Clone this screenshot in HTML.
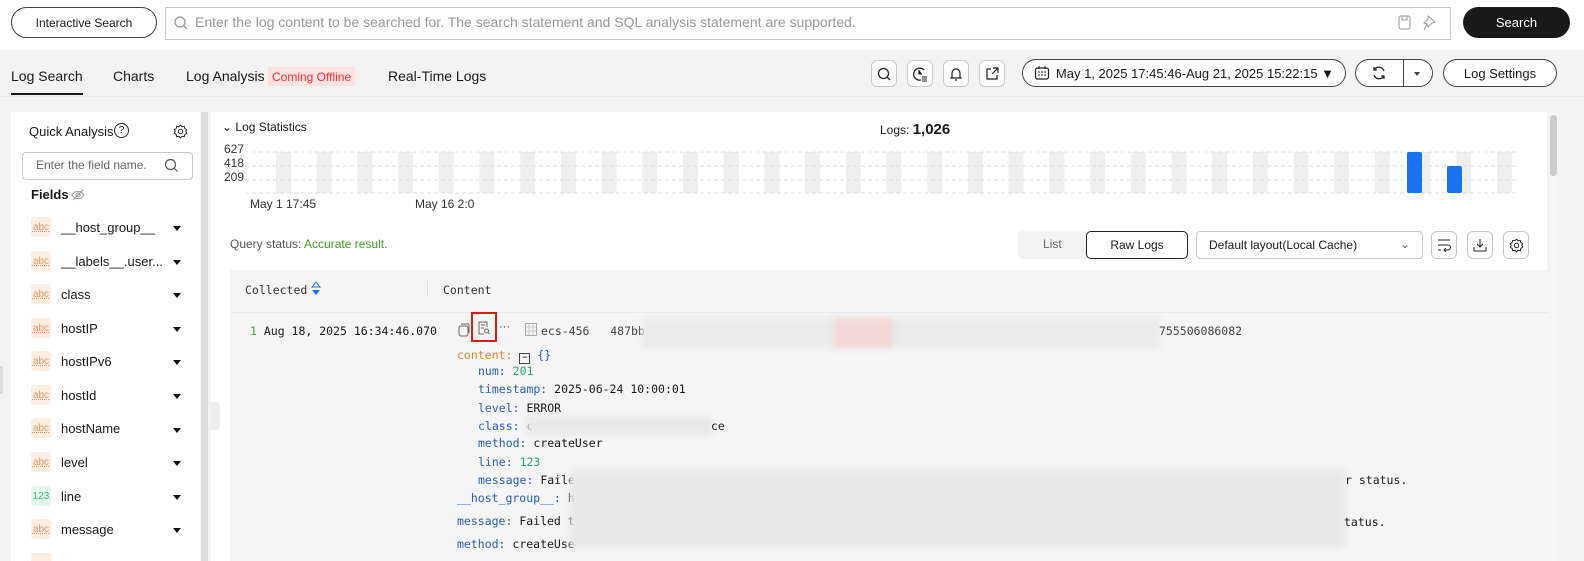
<!DOCTYPE html>
<html><head><meta charset="utf-8"><style>
*{box-sizing:border-box;margin:0;padding:0}
body{width:1584px;height:561px;overflow:hidden;background:#f3f3f3;font-family:"Liberation Sans",sans-serif;font-size:13px;color:#191919;position:relative}
.a{position:absolute}
.pill{position:absolute;border:1px solid #444;border-radius:17px;background:#fff;display:flex;align-items:center;justify-content:center}
.ib{position:absolute;width:26px;height:27px;border:1px solid #c8c8c8;border-radius:6px;background:#fff;display:flex;align-items:center;justify-content:center}
.mono{font-family:"DejaVu Sans Mono","Liberation Mono",monospace;font-size:11.5px}
.k{color:#2a5db0}
.g{color:#25a877}
.field{position:absolute;left:31px;display:flex;align-items:center;font-size:13px}
.tag{width:20px;height:20px;border-radius:3px;background:#fdeee4;color:#e59a60;font-size:10px;display:flex;align-items:center;justify-content:center;margin-right:10px;text-decoration:underline dotted}
.tri{position:absolute;left:173px;width:0;height:0;border-left:4px solid transparent;border-right:4px solid transparent;border-top:5px solid #111}
.blur{position:absolute;background:#e8e8e8;filter:blur(3px)}
.tab{position:absolute;top:68px;font-size:14px}
</style></head><body>
<div class="a" style="left:0;top:0;width:1584px;height:50px;background:#fff"></div>
<div class="pill" style="left:11px;top:7px;width:146px;height:31px;font-size:12px">Interactive Search</div>
<div class="a" style="left:165px;top:7px;width:1286px;height:33px;border:1px solid #c8c8c8;background:#fff"></div>
<svg class="a" style="left:174px;top:16px" width="14" height="14"><circle cx="6" cy="6" r="5" fill="none" stroke="#999" stroke-width="1.3"/><path d="M9.5 9.5 13 13" stroke="#999" stroke-width="1.3"/></svg>
<div class="a" style="left:195px;top:14px;font-size:14px;color:#999">Enter the log content to be searched for. The search statement and SQL analysis statement are supported.</div>
<svg class="a" style="left:1398px;top:15px" width="14" height="16"><rect x="1" y="1" width="11" height="13" rx="2" fill="none" stroke="#999"/><path d="M4 1v4h5V1" fill="none" stroke="#999"/></svg>
<svg class="a" style="left:1423px;top:15px" width="14" height="16"><path d="M5 1l7 6-3 1-4 4-1-3-3 6 3-6-3-1 4-4z" fill="none" stroke="#999"/></svg>
<div class="a" style="left:1463px;top:7px;width:107px;height:31px;background:#191919;color:#fff;border-radius:16px;display:flex;align-items:center;justify-content:center;font-size:13px">Search</div>

<div class="tab" style="left:11px">Log Search</div>
<div class="a" style="left:11px;top:93px;width:72px;height:2px;background:#191919"></div>
<div class="tab" style="left:113px">Charts</div>
<div class="tab" style="left:186px">Log Analysis</div>
<div class="a" style="left:268px;top:67px;height:19px;padding:3px 4px;background:#fde2e2;color:#e33;font-size:12px">Coming Offline</div>
<div class="tab" style="left:388px">Real-Time Logs</div>
<div class="a" style="left:0;top:96px;width:1584px;height:1px;background:#e8e8e8"></div>

<div class="ib" style="left:871px;top:60px"><svg width="14" height="14"><circle cx="6.5" cy="6.5" r="5" fill="none" stroke="#222" stroke-width="1.3"/><path d="M10 10l3 3" stroke="#222" stroke-width="1.3"/></svg></div>
<div class="ib" style="left:907px;top:60px"><svg width="16" height="16"><path d="M12 4A6 6 0 1 0 9 14" fill="none" stroke="#222" stroke-width="1.3"/><path d="M7 4v4h3M10 11h5M10 13h5M10 15h5" stroke="#222" stroke-width="1.1"/></svg></div>
<div class="ib" style="left:943px;top:60px"><svg width="14" height="16"><path d="M3 11V7a4 4 0 0 1 8 0v4l1 1H2z M6 14h2" fill="none" stroke="#222" stroke-width="1.2"/></svg></div>
<div class="ib" style="left:979px;top:60px"><svg width="14" height="14"><path d="M6 2H2v10h10V8M8 1h5v5M13 1L7 7" fill="none" stroke="#222" stroke-width="1.2"/></svg></div>
<div class="pill" style="left:1022px;top:59px;width:324px;height:28px;font-size:13px"><svg width="16" height="16" style="margin-right:6px"><rect x="1.5" y="3" width="13" height="11" rx="2" fill="none" stroke="#222" stroke-width="1.2"/><path d="M5 1v3M11 1v3M4 7h2M7 7h2M10 7h2M4 10h2M7 10h2M10 10h2" stroke="#222"/></svg>May 1, 2025 17:45:46-Aug 21, 2025 15:22:15 ▼</div>
<div class="pill" style="left:1355px;top:59px;width:78px;height:28px"></div>
<div class="a" style="left:1403px;top:59px;width:1px;height:28px;background:#444"></div>
<svg class="a" style="left:1371px;top:65px" width="16" height="16"><path d="M13 6A5.5 5.5 0 0 0 3 5M3 10a5.5 5.5 0 0 0 10 1M3 2v3h3M13 14v-3h-3" fill="none" stroke="#222" stroke-width="1.3"/></svg>
<div class="a" style="left:1414px;top:72px;border-left:3px solid transparent;border-right:3px solid transparent;border-top:4px solid #444"></div>
<div class="pill" style="left:1443px;top:59px;width:114px;height:28px;font-size:13px">Log Settings</div>

<div class="a" style="left:11px;top:112px;width:189px;height:449px;background:#fff"></div>
<div class="a" style="left:201px;top:112px;width:7px;height:449px;background:#ddd"></div>
<div class="a" style="left:0;top:366px;width:3px;height:28px;background:#ddd"></div>
<div class="a" style="left:29px;top:124px;font-size:13px">Quick Analysis</div>
<div class="a" style="left:114px;top:123px;width:15px;height:15px;border:1.3px solid #222;border-radius:50%;font-size:10px;text-align:center;line-height:13px">?</div>
<svg class="a" style="left:173px;top:124px" width="15" height="15"><circle cx="7.5" cy="7.5" r="2.2" fill="none" stroke="#222"/><path d="M7.5 1.2l1.6 1.5 2.2-.3.5 2.1 1.9 1.3-.9 1.7.9 1.7-1.9 1.3-.5 2.1-2.2-.3-1.6 1.5-1.6-1.5-2.2.3-.5-2.1L1.3 9.2l.9-1.7-.9-1.7 1.9-1.3.5-2.1 2.2.3z" fill="none" stroke="#222"/></svg>
<div class="a" style="left:22px;top:152px;width:171px;height:28px;border:1px solid #c8c8c8;border-radius:4px;background:#fff"></div>
<div class="a" style="left:36px;top:158px;font-size:12px;color:#666">Enter the field name.</div>
<svg class="a" style="left:164px;top:158px" width="15" height="15"><circle cx="6.5" cy="6.5" r="5" fill="none" stroke="#555" stroke-width="1.2"/><path d="M10 10l3.5 3.5" stroke="#555" stroke-width="1.2"/></svg>
<div class="a" style="left:31px;top:187px;font-size:13px;font-weight:bold">Fields</div>
<svg class="a" style="left:71px;top:189px" width="14" height="12"><path d="M1 6c3-5 9-5 12 0-3 5-9 5-12 0zM2 11L12 1" fill="none" stroke="#999"/><circle cx="7" cy="6" r="2" fill="none" stroke="#999"/></svg>

<div class="field" style="top:217px"><span class="tag">abc</span>__host_group__</div><div class="tri" style="top:226px"></div>
<div class="field" style="top:251px"><span class="tag">abc</span>__labels__.user...</div><div class="tri" style="top:260px"></div>
<div class="field" style="top:284px"><span class="tag">abc</span>class</div><div class="tri" style="top:293px"></div>
<div class="field" style="top:318px"><span class="tag">abc</span>hostIP</div><div class="tri" style="top:327px"></div>
<div class="field" style="top:351px"><span class="tag">abc</span>hostIPv6</div><div class="tri" style="top:360px"></div>
<div class="field" style="top:385px"><span class="tag">abc</span>hostId</div><div class="tri" style="top:394px"></div>
<div class="field" style="top:418px"><span class="tag">abc</span>hostName</div><div class="tri" style="top:428px"></div>
<div class="field" style="top:452px"><span class="tag">abc</span>level</div><div class="tri" style="top:461px"></div>
<div class="field" style="top:486px"><span class="tag" style="background:#e4f7ee;color:#3bb87f;text-decoration:none">123</span>line</div><div class="tri" style="top:495px"></div>
<div class="field" style="top:519px"><span class="tag">abc</span>message</div><div class="tri" style="top:528px"></div>
<div class="a" style="left:31px;top:553px;width:20px;height:8px;background:#fdeee4"></div>

<div class="a" style="left:211px;top:112px;width:1336px;height:449px;background:#fff"></div>
<div class="a" style="left:211px;top:402px;width:9px;height:28px;background:#eee;border-radius:0 4px 4px 0"></div>
<div class="a" style="left:1550px;top:112px;width:8px;height:449px;background:#f5f5f5"></div>
<div class="a" style="left:1550px;top:115px;width:7px;height:61px;background:#ccc;border-radius:4px"></div>
<div class="a" style="left:222px;top:120px;font-size:12px">⌄ Log Statistics</div>
<div class="a" style="left:880px;top:121px;font-size:12px">Logs: <b style="font-size:15px">1,026</b></div>
<div class="a" style="left:224px;top:142px;font-size:12px;line-height:14px;color:#333">627<br>418<br>209</div>
<svg class="a" style="left:240px;top:145px" width="1290" height="55">
<g fill="#efefef" id="bars"></g>
<path d="M5 7H1276M5 21H1276M5 35H1276M5 48H1276" stroke="#ddd" stroke-dasharray="4 3"/>
<rect x="1167" y="7" width="15" height="41" rx="2" fill="#1a73f5"/>
<rect x="1207" y="21" width="15" height="27" rx="2" fill="#1a73f5"/>
</svg>
<div class="a" style="left:250px;top:197px;font-size:12px;color:#333">May 1 17:45</div>
<div class="a" style="left:415px;top:197px;font-size:12px;color:#333">May 16 2:0</div>
<div class="a" style="left:230px;top:237px;font-size:12px;color:#555">Query status: <span style="color:#3aa01e">Accurate result.</span></div>
<div class="a" style="left:1018px;top:231px;width:169px;height:28px;background:#f3f3f3;border-radius:4px"></div>
<div class="a" style="left:1043px;top:237px;font-size:12px;color:#666">List</div>
<div class="a" style="left:1086px;top:231px;width:102px;height:28px;border:1px solid #222;border-radius:5px;background:#fff;font-size:12px;display:flex;align-items:center;justify-content:center">Raw Logs</div>
<div class="a" style="left:1196px;top:231px;width:227px;height:28px;border:1px solid #c8c8c8;border-radius:4px;background:#fff;font-size:12px;padding:6px 12px">Default layout(Local Cache)</div>
<div class="a" style="left:1400px;top:237px;font-size:12px;color:#666">⌄</div>
<div class="ib" style="left:1431px;top:231px;height:28px"><svg width="14" height="14"><path d="M1 2h12M1 7h10a2.5 2.5 0 0 1 0 5H7M9 10l-2 2 2 2M1 12h3" fill="none" stroke="#222"/></svg></div>
<div class="ib" style="left:1467px;top:231px;height:28px"><svg width="14" height="14"><path d="M7 1v8M4 6l3 3 3-3M1 9v4h12V9" fill="none" stroke="#222"/></svg></div>
<div class="ib" style="left:1503px;top:231px;height:28px"><svg width="15" height="15"><circle cx="7.5" cy="7.5" r="2.2" fill="none" stroke="#222"/><path d="M7.5 1.2l1.6 1.5 2.2-.3.5 2.1 1.9 1.3-.9 1.7.9 1.7-1.9 1.3-.5 2.1-2.2-.3-1.6 1.5-1.6-1.5-2.2.3-.5-2.1L1.3 9.2l.9-1.7-.9-1.7 1.9-1.3.5-2.1 2.2.3z" fill="none" stroke="#222"/></svg></div>

<div class="a" style="left:230px;top:270px;width:1318px;height:291px;background:#f5f5f5"></div>
<div class="a" style="left:230px;top:312px;width:1318px;height:1px;background:#ebebeb"></div>
<div class="a mono" style="left:245px;top:283px;color:#333">Collected</div>
<svg class="a" style="left:311px;top:281px" width="10" height="16"><path d="M5 1L1 6h8z" fill="none" stroke="#1a73f5"/><path d="M1 9h8l-4 5z" fill="#1a73f5"/></svg>
<div class="a" style="left:427px;top:281px;width:1px;height:16px;background:#ddd"></div>
<div class="a mono" style="left:443px;top:283px;color:#333">Content</div>
<div class="a mono" style="left:250px;top:324px"><span style="color:#3aa01e">1</span> Aug 18, 2025 16:34:46.070</div>
<svg class="a" style="left:458px;top:323px" width="12" height="14"><rect x="1" y="3" width="9" height="10" rx="2" fill="none" stroke="#666"/><path d="M3 1h7a1 1 0 0 1 1 1v8" fill="none" stroke="#666"/></svg>
<div class="a" style="left:471px;top:312px;width:26px;height:30px;border:2px solid #e8141a"></div>
<svg class="a" style="left:478px;top:321px" width="12" height="14"><path d="M9 6V1H1v12h5M3 4h4M3 7h3" fill="none" stroke="#666"/><circle cx="8.5" cy="10" r="2" fill="none" stroke="#666"/><path d="M10 11.5l1.5 1.5" stroke="#666"/></svg>
<div class="a" style="left:499px;top:321px;font-size:11px;color:#333">···</div>
<svg class="a" style="left:525px;top:323px" width="12" height="13"><rect x=".5" y=".5" width="11" height="12" fill="none" stroke="#aaa"/><path d="M4 1v11M8 1v11M1 4h10M1 8h10" stroke="#ccc"/></svg>
<div class="a mono" style="left:541px;top:324px;color:#444">ecs-456&nbsp;&nbsp;&nbsp;487bb</div>
<div class="blur" style="left:642px;top:318px;width:518px;height:30px;background:#ebebeb"></div>
<div class="blur" style="left:833px;top:318px;width:60px;height:30px;background:#f4d8d8"></div>
<div class="a mono" style="left:1159px;top:324px;color:#444">755506086082</div>
<div class="a mono" style="left:457px;top:348px"><span style="color:#e2852e">content:</span> <span style="display:inline-block;width:11px;height:11px;border:1px solid #444;vertical-align:-1px;font-size:9px;line-height:8px;text-align:center">−</span> <span class="k">{}</span></div>
<div class="a mono" style="left:478px;top:364px"><span class="k">num:</span> <span class="g">201</span></div>
<div class="a mono" style="left:478px;top:382px"><span class="k">timestamp:</span> 2025-06-24 10:00:01</div>
<div class="a mono" style="left:478px;top:401px"><span class="k">level:</span> ERROR</div>
<div class="a mono" style="left:478px;top:419px"><span class="k">class:</span> c</div>
<div class="blur" style="left:527px;top:417px;width:185px;height:18px"></div>
<div class="a mono" style="left:711px;top:419px">ce</div>
<div class="a mono" style="left:478px;top:436px"><span class="k">method:</span> createUser</div>
<div class="a mono" style="left:478px;top:455px"><span class="k">line:</span> <span class="g">123</span></div>
<div class="a mono" style="left:478px;top:473px"><span class="k">message:</span> Faile</div>
<div class="a mono" style="left:457px;top:491px"><span class="k">__host_group__:</span> h</div>
<div class="a mono" style="left:457px;top:514px"><span class="k">message:</span> Failed t</div>
<div class="a mono" style="left:457px;top:537px"><span class="k">method:</span> createUse</div>
<div class="blur" style="left:570px;top:470px;width:775px;height:78px"></div>
<div class="a mono" style="left:1345px;top:473px">r status.</div>
<div class="a mono" style="left:1344px;top:515px">tatus.</div>
<script>
var g=document.getElementById('bars'),s='';for(var x=36;x<1276;x+=40.7){s+='<rect x="'+x.toFixed(1)+'" y="7" width="15" height="41"/>';}g.innerHTML=s;
</script>
</body></html>
